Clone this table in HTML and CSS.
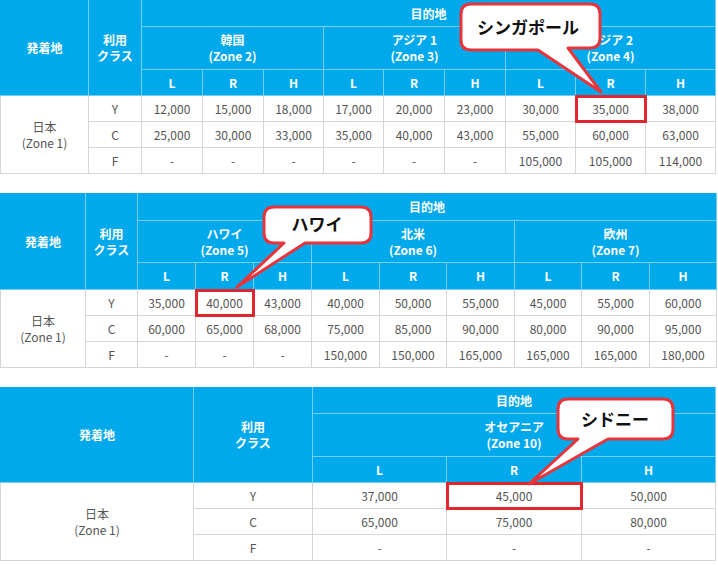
FILE: index.html
```html
<!DOCTYPE html>
<html lang="ja">
<head>
<meta charset="utf-8">
<title>必要マイル数</title>
<link rel="stylesheet" href="styles.css">
</head>
<body>
<div class="page">

<section class="fare t1">
<table>
<colgroup><col><col><col><col><col><col><col><col><col><col><col></colgroup>
<thead>
<tr class="h1"><th rowspan="3">発着地</th><th rowspan="3">利用<br>クラス</th><th colspan="9">目的地</th></tr>
<tr class="h2"><th colspan="3">韓国<br>(Zone 2)</th><th colspan="3">アジア 1<br>(Zone 3)</th><th colspan="3">アジア 2<br>(Zone 4)</th></tr>
<tr class="h3"><th>L</th><th>R</th><th>H</th><th>L</th><th>R</th><th>H</th><th>L</th><th>R</th><th>H</th></tr>
</thead>
<tbody>
<tr class="b"><td rowspan="3">日本<br>(Zone 1)</td><td>Y</td><td>12,000</td><td>15,000</td><td>18,000</td><td>17,000</td><td>20,000</td><td>23,000</td><td>30,000</td><td class="hl">35,000</td><td>38,000</td></tr>
<tr class="b"><td>C</td><td>25,000</td><td>30,000</td><td>33,000</td><td>35,000</td><td>40,000</td><td>43,000</td><td>55,000</td><td>60,000</td><td>63,000</td></tr>
<tr class="b"><td>F</td><td>-</td><td>-</td><td>-</td><td>-</td><td>-</td><td>-</td><td>105,000</td><td>105,000</td><td>114,000</td></tr>
</tbody>
</table>
<div class="callout co1">
<svg width="150" height="96" viewBox="0 0 150 96"><path d="M16,4 H135 Q145,4 145,14 V38 Q145,48 135,48 H113 L146,92 L83,50 H16 Q6,50 6,40 V14 Q6,4 16,4 Z"/></svg>
<span class="label">シンガポール</span>
</div>
</section>

<section class="fare t2">
<table>
<colgroup><col><col><col><col><col><col><col><col><col><col><col></colgroup>
<thead>
<tr class="h1"><th rowspan="3">発着地</th><th rowspan="3">利用<br>クラス</th><th colspan="9">目的地</th></tr>
<tr class="h2"><th colspan="3">ハワイ<br>(Zone 5)</th><th colspan="3">北米<br>(Zone 6)</th><th colspan="3">欧州<br>(Zone 7)</th></tr>
<tr class="h3"><th>L</th><th>R</th><th>H</th><th>L</th><th>R</th><th>H</th><th>L</th><th>R</th><th>H</th></tr>
</thead>
<tbody>
<tr class="b"><td rowspan="3">日本<br>(Zone 1)</td><td>Y</td><td>35,000</td><td class="hl">40,000</td><td>43,000</td><td>40,000</td><td>50,000</td><td>55,000</td><td>45,000</td><td>55,000</td><td>60,000</td></tr>
<tr class="b"><td>C</td><td>60,000</td><td>65,000</td><td>68,000</td><td>75,000</td><td>85,000</td><td>90,000</td><td>80,000</td><td>90,000</td><td>95,000</td></tr>
<tr class="b"><td>F</td><td>-</td><td>-</td><td>-</td><td>150,000</td><td>150,000</td><td>165,000</td><td>165,000</td><td>165,000</td><td>180,000</td></tr>
</tbody>
</table>
<div class="callout co2">
<svg width="150" height="95" viewBox="0 0 150 95"><path d="M44,7 H131 Q141,7 141,17 V33 Q141,43 131,43 H75 L7,87 L54,43 H44 Q34,43 34,33 V17 Q34,7 44,7 Z"/></svg>
<span class="label">ハワイ</span>
</div>
</section>

<section class="fare t3">
<table>
<colgroup><col><col><col><col><col></colgroup>
<thead>
<tr class="h1"><th rowspan="3">発着地</th><th rowspan="3">利用<br>クラス</th><th colspan="3">目的地</th></tr>
<tr class="h2"><th colspan="3">オセアニア<br>(Zone 10)</th></tr>
<tr class="h3"><th>L</th><th>R</th><th>H</th></tr>
</thead>
<tbody>
<tr class="b"><td rowspan="3">日本<br>(Zone 1)</td><td>Y</td><td>37,000</td><td class="hl">45,000</td><td>50,000</td></tr>
<tr class="b"><td>C</td><td>65,000</td><td>75,000</td><td>80,000</td></tr>
<tr class="b"><td>F</td><td>-</td><td>-</td><td>-</td></tr>
</tbody>
</table>
<div class="callout co3">
<svg width="160" height="95" viewBox="0 0 160 95"><path d="M48,5 H143 Q153,5 153,15 V35 Q153,45 143,45 H88 L9,90 L58,45 H48 Q38,45 38,35 V15 Q38,5 48,5 Z"/></svg>
<span class="label">シドニー</span>
</div>
</section>

</div>
</body>
</html>
```
FILE: styles.css
```css
html, body {
  margin: 0;
  padding: 0;
  background: #ffffff;
}

body {
  font-family: "Noto Sans CJK JP", "Noto Sans", sans-serif;
}

.page {
  width: 718px;
}

.fare {
  position: relative;
  width: 716px;
}

.fare + .fare {
  margin-top: 19px;
}

.fare table {
  border-collapse: collapse;
  table-layout: fixed;
  width: 716px;
}

.fare th,
.fare td {
  padding: 0;
  text-align: center;
  vertical-align: middle;
  font-size: 12px;
  line-height: 16px;
  white-space: nowrap;
}

.fare th {
  background: #00a9ec;
  color: #ffffff;
  font-weight: 700;
  border: 1px solid #74cef2;
}

.fare thead tr:first-child th {
  border-top-color: #00a9ec;
}

.fare th:first-child {
  border-left-color: #00a9ec;
}

.fare td {
  color: #555555;
  border: 1px solid #d6d6d6;
  background: #ffffff;
}

.h1 { height: 26px; }
.h2 { height: 43px; }
.h3 { height: 26px; }
.b  { height: 26px; }

.t2 .h1 { height: 27px; }
.t2 .h2 { height: 42px; }
.t2 .h3 { height: 27px; }

/* column widths */
.t1 col:nth-child(1) { width: 88px; }
.t1 col:nth-child(2) { width: 53px; }
.t1 col:nth-child(3),
.t1 col:nth-child(4),
.t1 col:nth-child(7),
.t1 col:nth-child(8) { width: 61px; }
.t1 col:nth-child(5),
.t1 col:nth-child(6) { width: 60px; }
.t1 col:nth-child(9),
.t1 col:nth-child(10),
.t1 col:nth-child(11) { width: 70px; }

.t2 col:nth-child(1) { width: 85px; }
.t2 col:nth-child(2) { width: 52px; }
.t2 col:nth-child(3),
.t2 col:nth-child(4),
.t2 col:nth-child(5) { width: 58px; }
.t2 col:nth-child(6),
.t2 col:nth-child(8),
.t2 col:nth-child(10) { width: 68px; }
.t2 col:nth-child(7),
.t2 col:nth-child(9),
.t2 col:nth-child(11) { width: 67px; }

.t3 col:nth-child(1) { width: 193px; }
.t3 col:nth-child(2) { width: 119px; }
.t3 col:nth-child(3) { width: 134px; }
.t3 col:nth-child(4) { width: 135px; }
.t3 col:nth-child(5) { width: 134px; }

/* highlighted cell */
.fare td.hl {
  outline: 3px solid #e0262e;
  outline-offset: -2px;
}

/* speech-bubble callouts */
.callout {
  position: absolute;
}

.callout svg {
  display: block;
}

.callout path {
  fill: #ffffff;
  stroke: #e8353b;
  stroke-width: 3;
  stroke-linejoin: round;
}

.callout .label {
  position: absolute;
  transform: translate(-50%, -50%);
  font-family: "Noto Sans CJK JP", sans-serif;
  font-weight: 700;
  font-size: 17px;
  line-height: 20px;
  color: #111111;
  white-space: nowrap;
}

.co1 { left: 455px; top: 0; }
.co1 .label { left: 73px; top: 27px; }

.co2 { left: 230px; top: 7px; }
.co2 .label { left: 87px; top: 24px; }

.co3 { left: 520px; top: 7px; }
.co3 .label { left: 95px; top: 25px; }
```
